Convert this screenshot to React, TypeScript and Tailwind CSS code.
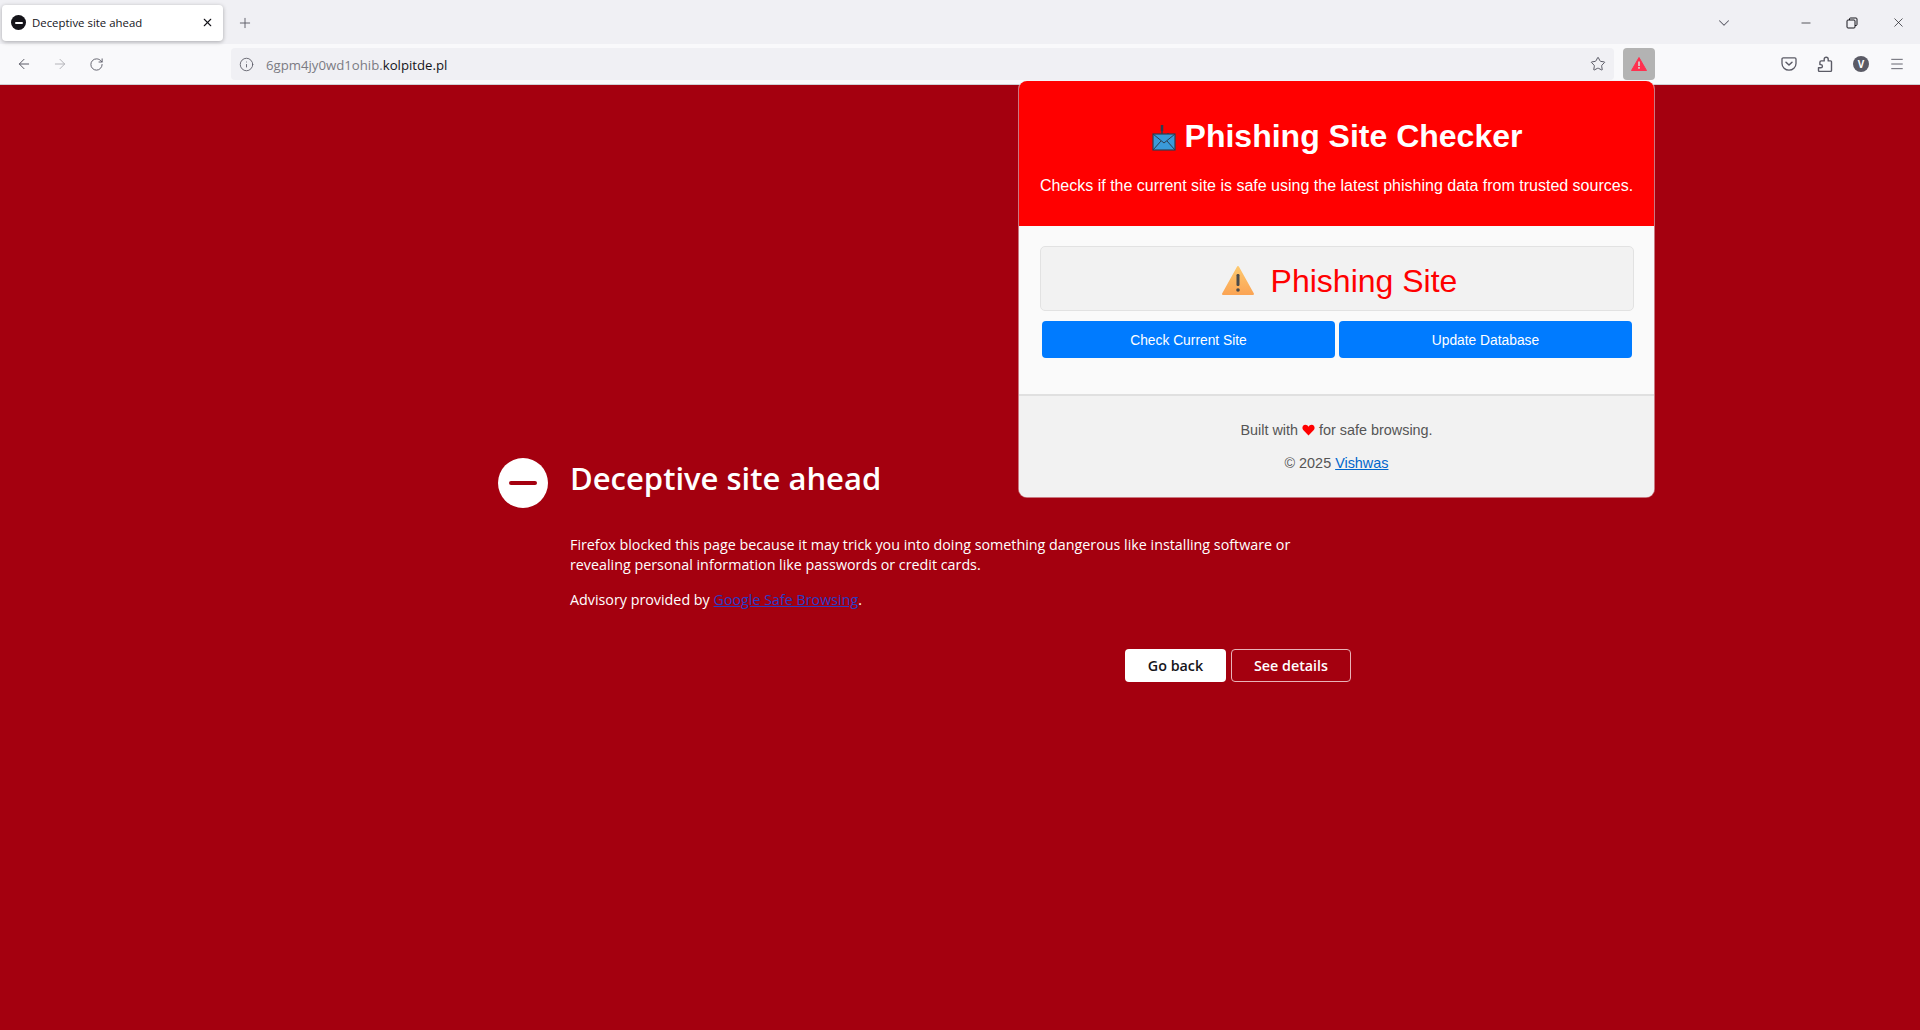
import { ArrowLeft, ArrowRight, ChevronDown, Info, Menu, Minus, Plus, RotateCw, Star, X } from 'lucide-react';

const uiFont = 'font-["Open_Sans","Noto_Sans",sans-serif]';

function PocketIcon() {
  return (
    <svg width="16" height="16" viewBox="0 0 16 16" fill="none" stroke="#5b5b66" strokeWidth="1.3">
      <path d="M2.2 1.8h11.6c.6 0 1.2.5 1.2 1.2v4.4c0 3.7-3.2 6.8-7 6.8s-7-3.100-7-6.800V3c0-.7.6-1.200 1.200-1.200z" />
      <path d="M5 6.200l3 2.800 3-2.800" strokeLinecap="round" strokeLinejoin="round" strokeWidth="1.500" />
    </svg>
  );
}

function ExtensionIcon() {
  return (
    <svg width="16" height="17" viewBox="0 0 16 17" fill="none" stroke="#5b5b66" strokeWidth="1.4" strokeLinejoin="round">
      <path d="M9.200 1.200c1.200 0 2 .9 2 2v1.700h2.400c.5 0 .9.4.9.9v8.700c0 .5-.4.9-.9.9H2.400c-.5 0-.9-.4-.9-.9v-2.700h2.300a1.600 1.600 0 0 0 0-3.200H2.900V6.300c0-.8.6-1.400 1.400-1.400h2.900V3.200c0-1.100.8-2 2-2z" />
    </svg>
  );
}

function RestoreIcon() {
  return (
    <svg width="12" height="12" viewBox="0 0 12 12" fill="none" stroke="#15141a" strokeWidth="1">
      <rect x="1" y="3" width="8" height="8" rx="1" />
      <path d="M3.500 3V2a1 1 0 0 1 1-1H10a1 1 0 0 1 1 1v5.500a1 1 0 0 1-1 1H9" />
    </svg>
  );
}

function BrowserChrome() {
  return (
    <header className={`shrink-0 ${uiFont}`}>
      {/* Tab strip */}
      <div className="h-[44px] bg-[#f0f0f4] flex items-center pl-[2px] pt-[1px]">
        <div className="w-[221px] h-[36px] bg-white rounded shadow-[0_1px_4px_rgba(0,0,0,0.3)] flex items-center pl-[9px] pr-[9px]">
          <span className="w-[15px] h-[15px] rounded-full bg-[#15141a] flex items-center justify-center shrink-0">
            <span className="w-[8px] h-[2px] bg-white rounded-sm" />
          </span>
          <span className="ml-[6px] text-[11.400px] text-[#15141a] whitespace-nowrap">Deceptive site ahead</span>
          <X className="ml-auto w-[13px] h-[13px] text-[#15141a]" strokeWidth={2} />
        </div>
        <Plus className="ml-[14px] w-[16px] h-[16px] text-[#5b5b66]" strokeWidth={1.4} />
        <div className="ml-auto flex items-center">
          <ChevronDown className="w-[18px] h-[18px] text-[#5b5b66]" strokeWidth={1.4} />
          <div className="w-[66px]" />
          <Minus className="w-[14px] h-[14px] text-[#15141a]" strokeWidth={1.2} />
          <div className="w-[33px]" />
          <RestoreIcon />
          <div className="w-[33px]" />
          <X className="w-[15px] h-[15px] text-[#15141a] mr-[14px]" strokeWidth={1.1} />
        </div>
      </div>

      {/* Nav bar */}
      <div className="h-[41px] bg-[#f9f9fb] border-b border-[#d0d0d4] flex items-start pt-[4px] pl-[16px]">
        <div className="h-[32px] flex items-center">
          <ArrowLeft className="w-[16px] h-[16px] text-[#5b5b66]" strokeWidth={1.5} />
          <ArrowRight className="ml-[20px] w-[16px] h-[16px] text-[#b4b4b9]" strokeWidth={1.5} />
          <RotateCw className="ml-[21px] w-[15px] h-[15px] text-[#5b5b66]" strokeWidth={1.5} />
        </div>
        <div className="ml-[127px] w-[1383px] h-[32px] bg-[#f0f0f4] rounded flex items-center pl-[8px] pr-[8px]">
          <Info className="w-[15px] h-[15px] text-[#5b5b66]" strokeWidth={1.4} />
          <span className="ml-[12px] pt-[3px] text-[13.200px] text-[#7b7b83] whitespace-nowrap">
            6gpm4jy0wd1ohib.<span className="text-[#15141a]">kolpitde.pl</span>
          </span>
          <Star className="ml-auto w-[16px] h-[16px] text-[#5b5b66]" strokeWidth={1.5} />
        </div>
        <div className="ml-[9px] w-[32px] h-[32px] bg-[#b3b3b3] rounded flex items-center justify-center">
          <svg width="16" height="16" viewBox="0 0 16 16">
            <path d="M8 1.500L15.500 14.500H.5z" fill="#ff304f" stroke="#ff304f" strokeLinejoin="round" />
            <rect x="7.200" y="5.500" width="1.600" height="4.500" fill="#d9d9d9" />
            <rect x="7.200" y="11" width="1.600" height="1.700" fill="#d9d9d9" />
          </svg>
        </div>
        <div className="ml-[126px] h-[32px] flex items-center gap-[20px]">
          <PocketIcon />
          <ExtensionIcon />
          <span className="w-[16px] h-[16px] rounded-full bg-[#5b5b66] text-white text-[10px] font-bold flex items-center justify-center">V</span>
          <Menu className="w-[16px] h-[16px] text-[#5b5b66]" strokeWidth={1.4} />
        </div>
      </div>
    </header>
  );
}

function BlockedPage() {
  return (
    <main className={`flex-1 bg-[#a4000f] text-white pl-[498px] pt-[373px] ${uiFont}`}>
      <div className="w-[853px]">
        <div className="flex items-start">
          <span className="w-[50px] h-[50px] rounded-full bg-white flex items-center justify-center shrink-0">
            <span className="w-[28px] h-[4px] rounded-full bg-[#a4000f]" />
          </span>
          <h1 className="ml-[22px] text-[31px] leading-[40px] font-semibold whitespace-nowrap">Deceptive site ahead</h1>
        </div>
        <div className="ml-[72px] mt-[27px]">
          <p className="w-[780px] text-[14.300px] leading-[20px]">
            Firefox blocked this page because it may trick you into doing something dangerous like installing software or revealing personal information like passwords or credit cards.
          </p>
          <p className="mt-[15px] text-[14.300px] leading-[20px]">
            Advisory provided by <a className="text-[#2b3cc4] underline" href="#">Google Safe Browsing</a>.
          </p>
        </div>
        <div className="mt-[39px] flex justify-end gap-[5px]">
          <button className="w-[101px] h-[33px] bg-white text-[#15141a] text-[14.300px] font-semibold rounded-[4px]">Go back</button>
          <button className="w-[120px] h-[33px] border border-[#e8b3b8] text-white text-[14.300px] font-semibold rounded-[4px]">See details</button>
        </div>
      </div>
    </main>
  );
}

function CheckerPopup() {
  return (
    <div className='absolute left-[1019px] top-[81px] w-[635px] rounded-[8px] overflow-hidden ring-1 ring-[#f0f0f4]/50 bg-[#fafafa] font-["Liberation_Sans",Arial,sans-serif]'>
      <div className="h-[145px] bg-[#ff0000] text-white text-center pt-[32px]">
        <h2 className="text-[32px] leading-[46px] font-bold flex items-center justify-center">
          <svg width="26" height="30" viewBox="0 0 26 30" className="mr-[8px] mt-[2px]">
            <path d="M11 9V3" stroke="#2d3e50" strokeWidth="2.500" fill="none" />
            <path d="M11 3v12" stroke="#2d3e50" strokeWidth="1.500" fill="none" />
            <path d="M17 11v3a2 2 0 0 1-4 0" stroke="#2d3e50" strokeWidth="1.500" fill="none" />
            <rect x="2" y="12" width="22" height="16" fill="#3a9ad9" stroke="#2d3e50" strokeWidth="1.200" />
            <path d="M2 12l11 9 11-9M2 28l8-9M24 28l-8-9" stroke="#2d3e50" strokeWidth="1" fill="none" />
          </svg>
          Phishing Site Checker
        </h2>
        <p className="mt-[18px] text-[16px] leading-[18px]">Checks if the current site is safe using the latest phishing data from trusted sources.</p>
      </div>

      <div className="pl-[21px] pr-[20px] pt-[20px] pb-[36px]">
        <div className="h-[65px] bg-[#f2f2f2] border border-[#e2e2e2] rounded-[5px] flex items-center justify-center pl-[4px] pt-[4px] text-[32px] text-[#ff0000]">
          <svg width="34" height="32" viewBox="0 0 34 32" className="mr-[16px]">
            <defs>
              <linearGradient id="warnFill" x1="0" y1="0" x2="0" y2="1">
                <stop offset="0" stopColor="#fdc86e" />
                <stop offset="1" stopColor="#fba555" />
              </linearGradient>
            </defs>
            <path d="M17 2L32 29H2z" fill="url(#warnFill)" stroke="url(#warnFill)" strokeWidth="2" strokeLinejoin="round" />
            <rect x="15.500" y="9" width="3" height="12" rx="1.200" fill="#4a4a4a" />
            <circle cx="17" cy="25" r="1.800" fill="#4a4a4a" />
          </svg>
          Phishing Site
        </div>
        <div className="mt-[10px] px-[2px] flex gap-[4px]">
          <button className="flex-1 h-[37px] pt-[3px] bg-[#007bff] text-white text-[13.800px] rounded-[4px]">Check Current Site</button>
          <button className="flex-1 h-[37px] pt-[3px] bg-[#007bff] text-white text-[13.800px] rounded-[4px]">Update Database</button>
        </div>
      </div>

      <div className="h-[103px] bg-[#f2f2f2] border-t-2 border-[#e0e0e0] text-center text-[14.400px] text-[#555555] pt-[26px]">
        <p className="leading-[16px]">
          Built with{' '}
          <svg width="13" height="12" viewBox="0 0 13 12" className="inline-block align-[-1px]">
            <path d="M6.500 11.500L1.200 6C-.4 4.200.5.800 3.300.8c1.500 0 2.600.9 3.200 2 .6-1.100 1.700-2 3.200-2 2.800 0 3.700 3.400 2.100 5.200z" fill="#ff0000" />
          </svg>{' '}
          for safe browsing.
        </p>
        <p className="mt-[17px] leading-[16px]">© 2025 <a className="text-[#0066cc] underline" href="#">Vishwas</a></p>
      </div>
    </div>
  );
}

export default function App() {
  return (
    <div className="relative h-[1030px] w-[1920px] flex flex-col overflow-hidden">
      <BrowserChrome />
      <BlockedPage />
      <CheckerPopup />
    </div>
  );
}
